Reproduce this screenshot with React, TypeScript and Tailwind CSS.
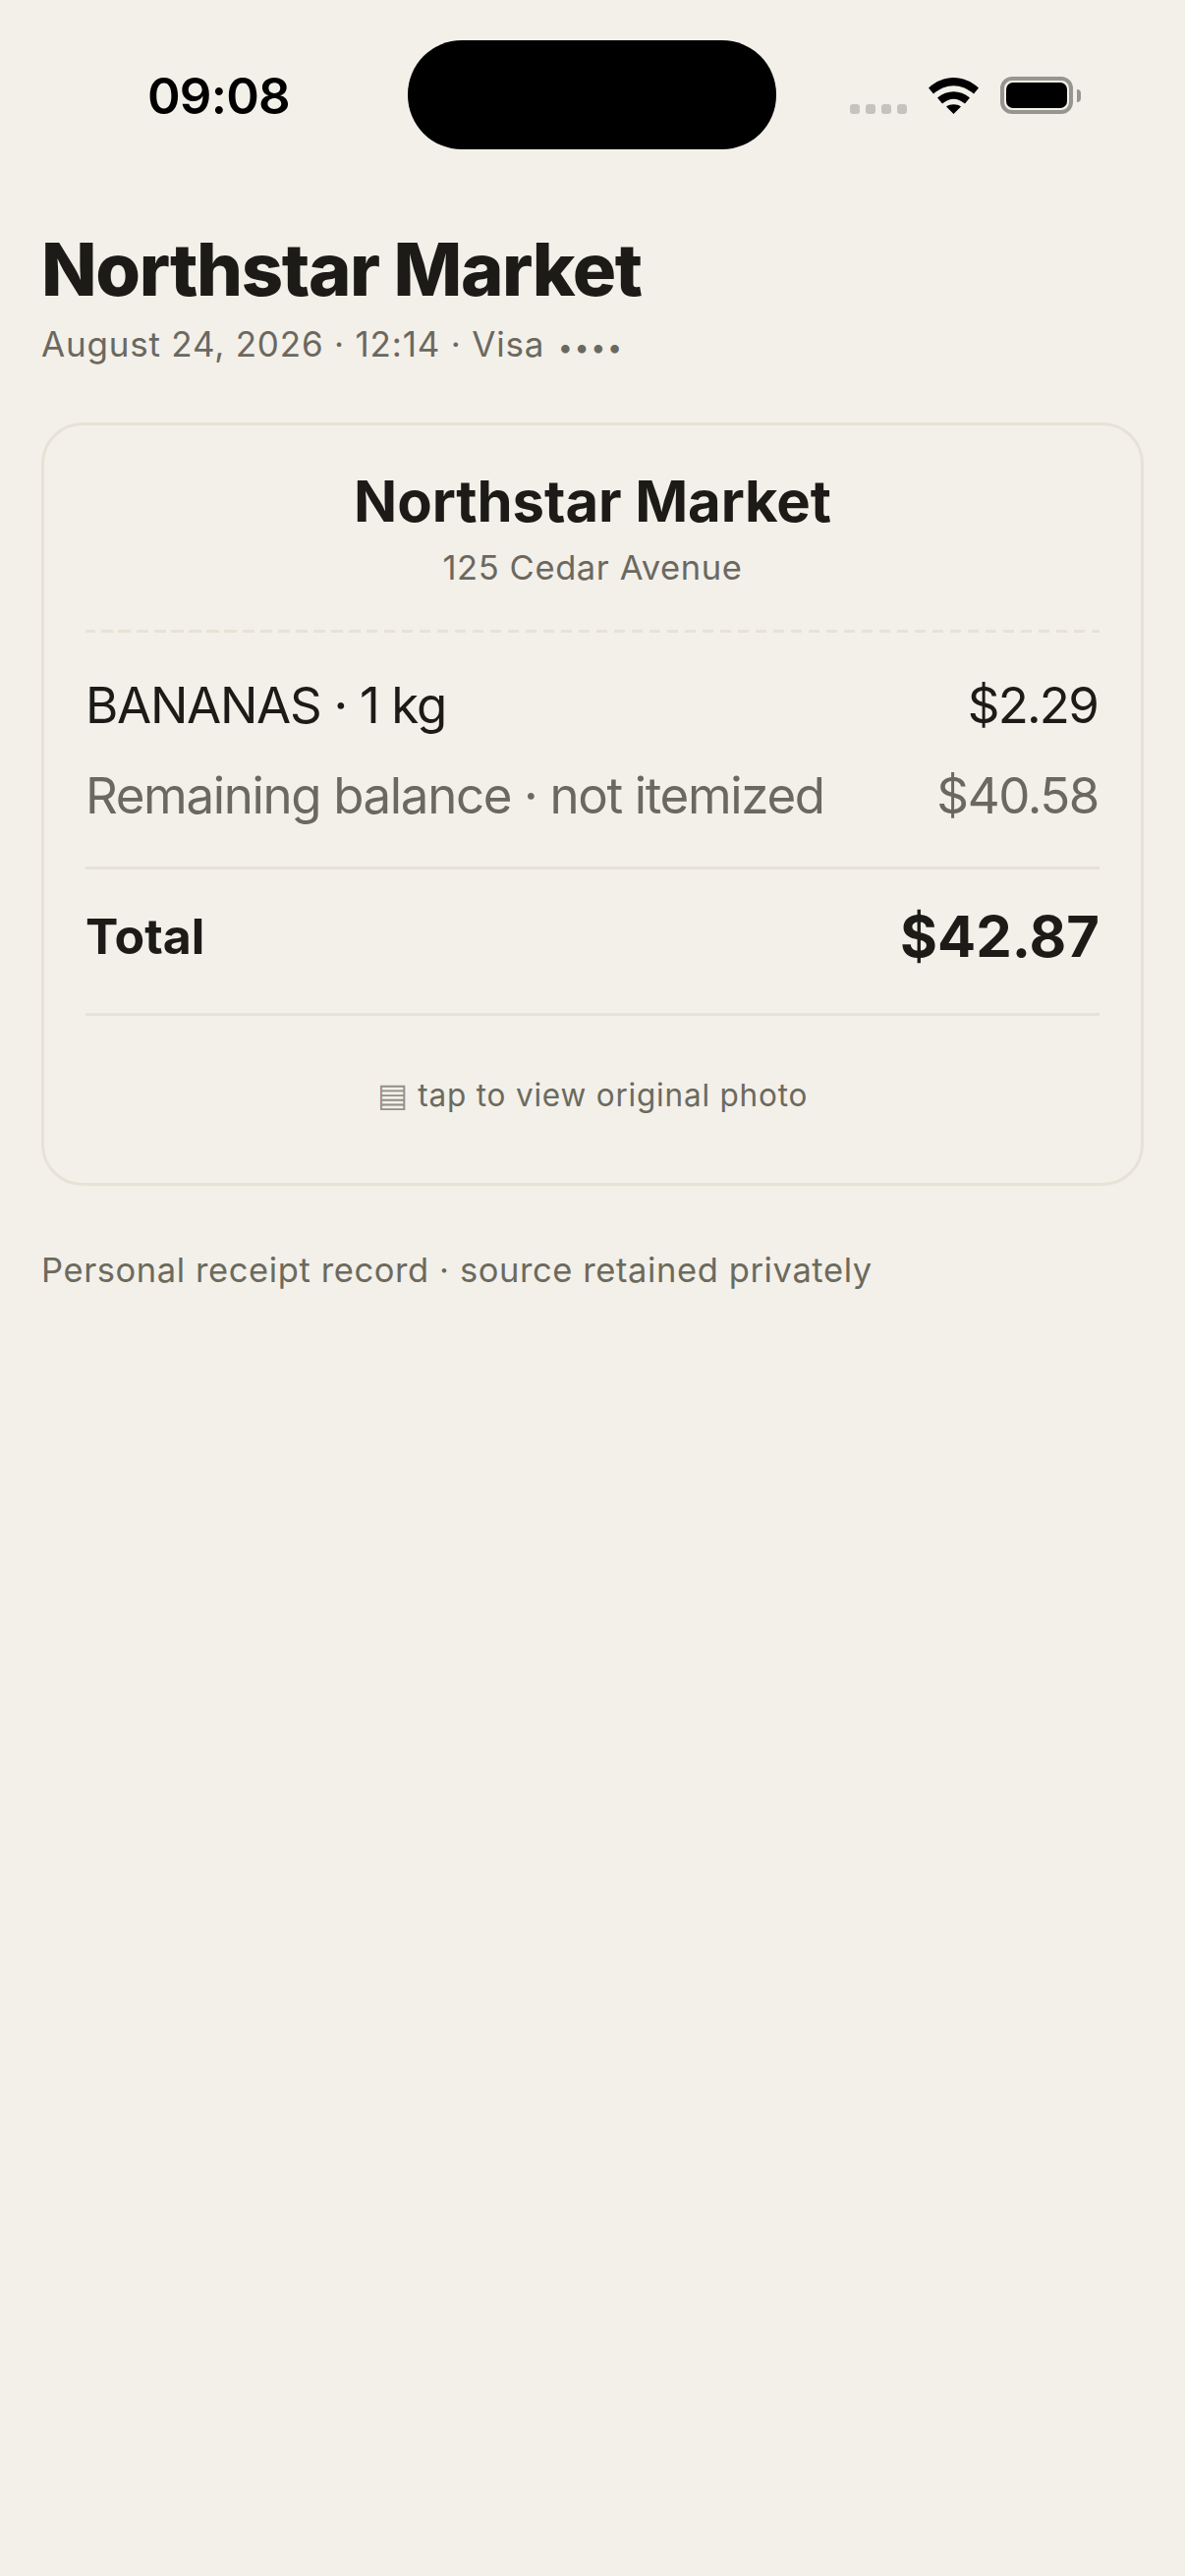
export default function App() {
  return (
    <div className="min-h-[2622px] w-[1206px] bg-[#f3f0ea] font-['Inter','Liberation_Sans',sans-serif] text-[#1c1b17]">
      <div className="relative h-[192px]">
        <span className="absolute left-[150px] top-[66px] text-[51px] leading-[64px] font-semibold tracking-[-0.8px] text-black">09:08</span>
        <div className="absolute left-[415px] top-[41px] h-[111px] w-[375px] rounded-[55px] bg-black" />
        <div className="absolute left-[865px] top-[106px] flex gap-[6px]">
          <i className="block h-[10px] w-[10px] rounded-[3px] bg-[#c4c3be]" />
          <i className="block h-[10px] w-[10px] rounded-[3px] bg-[#c4c3be]" />
          <i className="block h-[10px] w-[10px] rounded-[3px] bg-[#c4c3be]" />
          <i className="block h-[10px] w-[10px] rounded-[3px] bg-[#c4c3be]" />
        </div>
        <svg className="absolute left-[945px] top-[79px]" width="51" height="37" viewBox="0 0 51 37">
          <path d="M0 10.5C15-3.5 36-3.500 51 10.500L46 16.500C33 5.500 18 5.500 5 16.500Z" fill="#000" />
          <path d="M9 20.500C19 12 32 12 42 20.500L37 26.500C29 20 22 20 14 26.500Z" fill="#000" />
          <path d="M18 29.500C22 26.500 29 26.500 33 29.500L25.500 37Z" fill="#000" />
        </svg>
        <div className="absolute left-[1018px] top-[78px] h-[38px] w-[74px] rounded-[12px] border-[4px] border-[#969590] p-[2px]">
          <div className="h-full w-full rounded-[7px] bg-black" />
        </div>
        <div className="absolute left-[1096px] top-[91px] h-[13px] w-[4px] rounded-r-[4px] bg-[#969590]" />
      </div>

      <div className="px-[42px]">
        <h1 className="mt-[37px] text-[74px] leading-[90px] font-extrabold tracking-[-1.4px]">Northstar Market</h1>
        <p className="mt-[6px] text-[35px] leading-[50px] tracking-[0.8px] text-[#6b6860]">August 24, 2026 · 12:14 · Visa <span className="ml-[3px] text-[27px] tracking-[1.5px]">••••</span></p>

        <div className="mt-[51px] rounded-[42px] border-[3px] border-[#e7e2d6] px-[42px] pt-[39px] pb-[68px]">
          <div className="text-center text-[58px] leading-[76px] font-bold tracking-[-0.1px]">Northstar Market</div>
          <div className="mt-[7px] text-center text-[34.5px] leading-[46px] tracking-[0.6px] text-[#6b6860]">125 Cedar Avenue</div>
          <div className="mt-[40px] h-[3px] bg-[repeating-linear-gradient(90deg,#e7e2d6_0_9.5px,transparent_9.5px_15.5px,#e7e2d6_15.5px_18px)]" />
          <div className="mt-[42px] flex justify-between text-[51px] leading-[64px] tracking-[-1.3px]">
            <span>BANANAS · 1 kg</span>
            <span className="mr-[2px] tracking-[-1.8px]">$2.29</span>
          </div>
          <div className="mt-[28px] flex justify-between text-[51px] leading-[64px] tracking-[-1.35px] text-[#6b6860]">
            <span>Remaining balance · not itemized</span>
            <span className="mr-[1px] tracking-[-1.4px]">$40.58</span>
          </div>
          <div className="mt-[40px] flex items-center justify-between border-y-[3px] border-[#e7e2d6] pt-[22px] pb-[32px]">
            <span className="text-[50px] leading-[92px] font-bold">Total</span>
            <span className="text-[58px] leading-[92px] font-bold">$42.87</span>
          </div>
          <div className="mt-[59px] text-center text-[31.5px] leading-[42px] tracking-[0.8px] text-[#6c6a5c]"><span className="text-[33px] opacity-70">▤</span> tap to view original photo</div>
        </div>

        <p className="mt-[63px] text-[34.5px] leading-[46px] tracking-[0.6px] text-[#6c6a5c]">Personal receipt record · source retained privately</p>
      </div>
    </div>
  );
}
